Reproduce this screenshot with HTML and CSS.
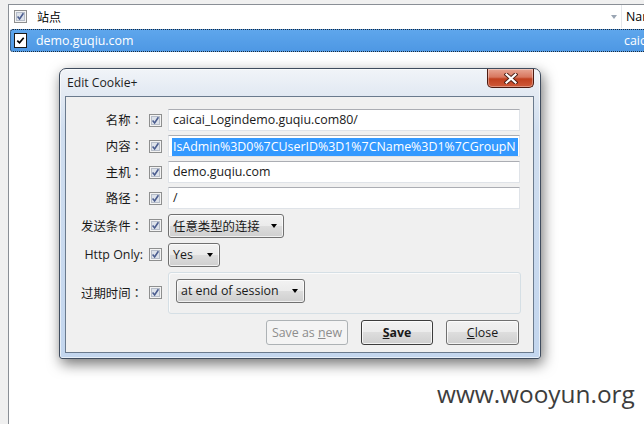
FILE: index.html
```html
<!DOCTYPE html>
<html>
<head>
<meta charset="utf-8">
<title>Edit Cookie+</title>
<link rel="stylesheet" href="styles.css">
</head>
<body>
<div class="app">
  <div class="list">
    <div class="hdr">
      <div class="col-site">
        <span class="cb"><svg width="13" height="13" viewBox="0 0 13 13"><rect x=".5" y=".5" width="12" height="12" fill="#f3f3f3" stroke="#8e8f8f"/><rect x="2.5" y="2.5" width="8" height="8" fill="#dde2ea" stroke="#b6bdc9"/><path d="M3.6 6.6l2 2.3 3.8-5.6" fill="none" stroke="#4b5d8f" stroke-width="1.6"/></svg></span>
        <span class="hdr-label">站点</span>
        <span class="sort"></span>
      </div>
      <div class="col-name">Name</div>
    </div>
    <div class="row sel">
      <div class="col-site">
        <span class="cb-row"><svg width="13" height="15" viewBox="0 0 13 15"><rect x=".5" y=".5" width="12" height="14" fill="#fff" stroke="#1a1a1a"/><path d="M3.3 7.6l2.2 2.2 4.2-5" fill="none" stroke="#000" stroke-width="1.7"/></svg></span>
        <span class="site-text">demo.guqiu.com</span>
      </div>
      <div class="col-name">caicai_Login</div>
    </div>
  </div>
</div>

<div class="dialog">
  <div class="titlebar">
    <span class="title">Edit Cookie+</span>
    <span class="closebtn"><svg width="14" height="11" viewBox="0 0 14 11"><path d="M2.5 1.5l9 8M11.5 1.5l-9 8" stroke="#4a1d14" stroke-width="4" stroke-linecap="square"/><path d="M2.5 1.5l9 8M11.5 1.5l-9 8" stroke="#fff" stroke-width="2.2" stroke-linecap="square"/></svg></span>
  </div>
  <div class="client">
    <div class="form">
      <div class="lbl">名称<span class="colon">：</span></div>
      <span class="cb"><svg width="13" height="13" viewBox="0 0 13 13"><rect x=".5" y=".5" width="12" height="12" fill="#f3f3f3" stroke="#8e8f8f"/><rect x="2.5" y="2.5" width="8" height="8" fill="#dde2ea" stroke="#b6bdc9"/><path d="M3.6 6.6l2 2.3 3.8-5.6" fill="none" stroke="#4b5d8f" stroke-width="1.6"/></svg></span>
      <div class="field">caicai_Logindemo.guqiu.com80/</div>

      <div class="lbl">内容<span class="colon">：</span></div>
      <span class="cb"><svg width="13" height="13" viewBox="0 0 13 13"><rect x=".5" y=".5" width="12" height="12" fill="#f3f3f3" stroke="#8e8f8f"/><rect x="2.5" y="2.5" width="8" height="8" fill="#dde2ea" stroke="#b6bdc9"/><path d="M3.6 6.6l2 2.3 3.8-5.6" fill="none" stroke="#4b5d8f" stroke-width="1.6"/></svg></span>
      <div class="field"><span class="hl">IsAdmin%3D0%7CUserID%3D1%7CName%3D1%7CGroupN</span></div>

      <div class="lbl">主机<span class="colon">：</span></div>
      <span class="cb"><svg width="13" height="13" viewBox="0 0 13 13"><rect x=".5" y=".5" width="12" height="12" fill="#f3f3f3" stroke="#8e8f8f"/><rect x="2.5" y="2.5" width="8" height="8" fill="#dde2ea" stroke="#b6bdc9"/><path d="M3.6 6.6l2 2.3 3.8-5.6" fill="none" stroke="#4b5d8f" stroke-width="1.6"/></svg></span>
      <div class="field">demo.guqiu.com</div>

      <div class="lbl">路径<span class="colon">：</span></div>
      <span class="cb"><svg width="13" height="13" viewBox="0 0 13 13"><rect x=".5" y=".5" width="12" height="12" fill="#f3f3f3" stroke="#8e8f8f"/><rect x="2.5" y="2.5" width="8" height="8" fill="#dde2ea" stroke="#b6bdc9"/><path d="M3.6 6.6l2 2.3 3.8-5.6" fill="none" stroke="#4b5d8f" stroke-width="1.6"/></svg></span>
      <div class="field">/</div>

      <div class="lbl">发送条件<span class="colon">：</span></div>
      <span class="cb"><svg width="13" height="13" viewBox="0 0 13 13"><rect x=".5" y=".5" width="12" height="12" fill="#f3f3f3" stroke="#8e8f8f"/><rect x="2.5" y="2.5" width="8" height="8" fill="#dde2ea" stroke="#b6bdc9"/><path d="M3.6 6.6l2 2.3 3.8-5.6" fill="none" stroke="#4b5d8f" stroke-width="1.6"/></svg></span>
      <div class="combo combo-send"><span>任意类型的连接</span><i class="arrow"></i></div>

      <div class="lbl">Http Only:</div>
      <span class="cb"><svg width="13" height="13" viewBox="0 0 13 13"><rect x=".5" y=".5" width="12" height="12" fill="#f3f3f3" stroke="#8e8f8f"/><rect x="2.5" y="2.5" width="8" height="8" fill="#dde2ea" stroke="#b6bdc9"/><path d="M3.6 6.6l2 2.3 3.8-5.6" fill="none" stroke="#4b5d8f" stroke-width="1.6"/></svg></span>
      <div class="combo combo-yes"><span>Yes</span><i class="arrow"></i></div>

      <div class="lbl">过期时间<span class="colon">：</span></div>
      <span class="cb"><svg width="13" height="13" viewBox="0 0 13 13"><rect x=".5" y=".5" width="12" height="12" fill="#f3f3f3" stroke="#8e8f8f"/><rect x="2.5" y="2.5" width="8" height="8" fill="#dde2ea" stroke="#b6bdc9"/><path d="M3.6 6.6l2 2.3 3.8-5.6" fill="none" stroke="#4b5d8f" stroke-width="1.6"/></svg></span>
      <div class="group">
        <div class="combo combo-exp"><span>at end of session</span><i class="arrow"></i></div>
      </div>
    </div>
    <div class="buttons">
      <div class="btn btn-new disabled"><span>Save as <u>n</u>ew</span></div>
      <div class="btn btn-save"><span><u>S</u>ave</span></div>
      <div class="btn btn-close"><span><u>C</u>lose</span></div>
    </div>
  </div>
</div>

<div class="watermark">www.wooyun.org</div>
</body>
</html>
```

FILE: styles.css
```css
* { box-sizing: border-box; }
html, body { margin: 0; padding: 0; }
body {
  width: 644px;
  height: 424px;
  overflow: hidden;
  position: relative;
  background: #f0f0f0;
  font-family: "Open Sans", "Noto Sans CJK SC", sans-serif;
  font-size: 12.4px;
  color: #000;
}

/* background list */
.app {
  height: 424px;
  padding: 4px 0 0 8px;
  display: flex;
  flex-direction: column;
}
.list {
  flex: 1;
  background: #fff;
  border-top: 1px solid #8a8f96;
  border-left: 1px solid #8a8f96;
  overflow: hidden;
}
.hdr {
  display: flex;
  height: 23px;
}
.col-site {
  width: 612px;
  flex: none;
  display: flex;
  align-items: center;
  position: relative;
}
.col-name {
  flex: 1;
  white-space: nowrap;
  overflow: hidden;
  padding-left: 4px;
  display: flex;
  align-items: center;
}
.hdr .col-site { padding-left: 5px; }
.hdr .col-name { border-left: 1px solid #e3e6ea; }
.cb { display: block; width: 13px; height: 13px; line-height: 0; }
.cb svg { display: block; }
.hdr-label { margin-left: 10px; font-family: "Noto Sans CJK SC", sans-serif; font-size: 12px; }
.sort {
  position: absolute;
  right: 4px;
  top: 10px;
  width: 0; height: 0;
  border-top: 4px solid #9aa5b3;
  border-left: 3.5px solid transparent;
  border-right: 3.5px solid transparent;
}
.row {
  display: flex;
  height: 23px;
  margin: 1px 0 0 1px;
}
.row.sel {
  background: linear-gradient(#5ea6ec, #4e98e4);
  color: #fff;
  border: 1px dotted #1c2a3a;
  border-right: none;
  border-radius: 3px 0 0 3px;
}
.row .col-site { width: 610px; padding-left: 3px; }
.row .col-name { padding-left: 3px; }
.cb-row { display: block; width: 13px; height: 15px; line-height: 0; }
.site-text { margin-left: 9px; }

/* dialog */
.dialog {
  position: absolute;
  left: 59px;
  top: 68px;
  width: 482px;
  height: 291px;
  border: 1px solid #3f4c5e;
  border-radius: 7px 7px 3px 3px;
  background: linear-gradient(#f1f4f8 0, #e3eaf3 24px, #d0deef 60px, #c3d6ee 100%);
  box-shadow: 2px 5px 14px rgba(0,0,0,0.55), inset 0 0 0 1px rgba(255,255,255,0.6);
  padding: 0 6px 5px 5px;
  display: flex;
  flex-direction: column;
}
.titlebar {
  height: 27px;
  display: flex;
  align-items: center;
  padding-left: 2px;
  position: relative;
}
.title { color: #1e1e1e; font-size: 12.2px; }
.closebtn {
  position: absolute;
  right: 0;
  top: 0;
  width: 47px;
  height: 19px;
  border: 1px solid #4d1a10;
  border-top: none;
  border-radius: 0 0 5px 5px;
  background: linear-gradient(#e8a593 0, #d8775f 45%, #c1401f 55%, #cf5a3a 100%);
  box-shadow: inset 0 0 0 1px rgba(255,255,255,0.35);
  display: flex;
  align-items: center;
  justify-content: center;
}
.closebtn svg { display: block; }
.client {
  flex: 1;
  background: #f0f0f0;
  border: 1px solid #6a7a8d;
  display: flex;
  flex-direction: column;
}
.form {
  display: grid;
  grid-template-columns: 77px 13px 352px;
  grid-template-rows: 22px 22px 22px 22px 25px 25px 43px;
  column-gap: 6px;
  row-gap: 4px;
  padding-top: 12px;
  align-items: center;
}
.lbl {
  text-align: right;
  white-space: nowrap;
  color: #1a1a1a;
}
.colon { font-family: "Noto Sans CJK JP", sans-serif; }
.field {
  height: 22px;
  background: #fff;
  border: 1px solid #dfe3e8;
  border-top-color: #abadb3;
  padding: 0 4px;
  line-height: 20px;
  white-space: nowrap;
  overflow: hidden;
  color: #1a1a1a;
}
.hl {
  display: inline-block;
  background: #3399ff;
  color: #fff;
  line-height: 18px;
  padding: 0 2px 0 1px;
  margin-left: -1px;
  width: 346px;
  overflow: hidden;
  vertical-align: middle;
}
.combo {
  height: 24px;
  border: 1px solid #707070;
  border-radius: 3px;
  background: linear-gradient(#f2f2f2 0, #ebebeb 50%, #dddddd 50%, #cfcfcf 100%);
  box-shadow: inset 0 0 0 1px rgba(255,255,255,0.7);
  display: flex;
  align-items: center;
  justify-content: space-between;
  padding-left: 4px;
  white-space: nowrap;
  color: #1a1a1a;
  justify-self: start;
}
.arrow {
  display: block;
  width: 0; height: 0;
  border-top: 4px solid #000;
  border-left: 3.5px solid transparent;
  border-right: 3.5px solid transparent;
  margin-right: 6px;
}
.combo-send { width: 116px; }
.combo-yes { width: 52px; }
.combo-exp { width: 129px; }
.group {
  width: 353px;
  height: 42px;
  border: 1px solid #d5dfe5;
  border-radius: 3px;
  box-shadow: inset 1px 1px 0 #fafafa;
  padding: 6px 0 0 7px;
}
.buttons {
  display: flex;
  justify-content: flex-end;
  gap: 13px;
  padding-right: 14px;
  margin-top: 6px;
}
.btn {
  height: 25px;
  border: 1px solid #707070;
  border-radius: 3px;
  background: linear-gradient(#f2f2f2 0, #ebebeb 50%, #dddddd 50%, #cfcfcf 100%);
  box-shadow: inset 0 0 0 1px rgba(255,255,255,0.75);
  display: flex;
  align-items: center;
  justify-content: center;
  color: #1a1a1a;
  white-space: nowrap;
}
.btn u { text-decoration: underline; text-underline-offset: 1px; }
.btn-new { width: 82px; }
.btn-save { width: 72px; font-weight: bold; border-color: #3c3c3c; }
.btn-close { width: 73px; }
.btn.disabled {
  background: #f4f4f4;
  border-color: #adb2b5;
  color: #8d8d8d;
  box-shadow: none;
}

.watermark {
  position: absolute;
  left: 437px;
  top: 382px;
  font-family: "Open Sans", sans-serif;
  font-size: 24.4px;
  line-height: 24px;
  color: #3d3d3d;
  white-space: nowrap;
}
```
